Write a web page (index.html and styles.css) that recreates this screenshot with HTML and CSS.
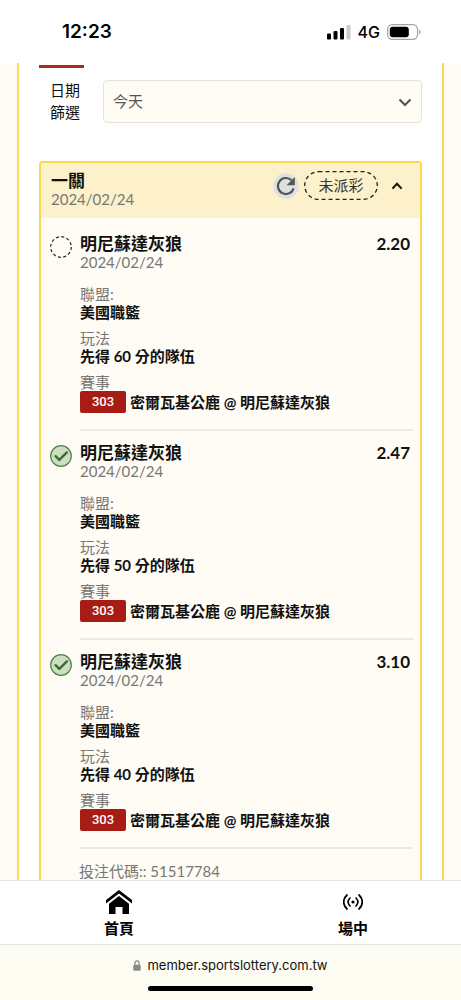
FILE: index.html
```html
<!DOCTYPE html>
<html lang="zh-Hant">
<head>
<meta charset="utf-8">
<meta name="viewport" content="width=device-width, initial-scale=1">
<title>投注紀錄</title>
<link rel="stylesheet" href="styles.css">
</head>
<body>
<header class="status">
  <span class="status-time">12:23</span>
  <span class="status-right">
    <svg width="24" height="16" viewBox="0 0 24 16"><rect x="0" y="9.500" width="4" height="6" rx="1"/><rect x="6.500" y="7" width="4" height="8.500" rx="1"/><rect x="13" y="4" width="4" height="11.500" rx="1"/><rect x="19.500" y="1" width="4" height="14.500" rx="1" fill="#ccc"/></svg>
    <span class="network">4G</span>
    <svg width="34" height="16" viewBox="0 0 34 16"><rect x=".7" y=".7" width="29.800" height="14.600" rx="4.500" fill="none" stroke="#a6a6a6" stroke-width="1.300"/><rect x="2.800" y="2.800" width="19" height="10.400" rx="3"/><path d="M32 5.500c2 .8 2 4.200 0 5z" fill="#a6a6a6"/></svg>
  </span>
</header>

<main class="page">
  <section class="panel">
    <div class="tab-mark"></div>
    <div class="filter">
      <label class="filter-label" for="range">日期篩選</label>
      <div class="select-wrap">
        <select class="select" id="range"><option>今天</option></select>
        <svg class="select-arrow" width="14" height="9" viewBox="0 0 14 9"><path d="M1.500 1.500 7 7l5.500-5.500" fill="none" stroke="#555" stroke-width="2.200"/></svg>
      </div>
    </div>

    <article class="card">
      <header class="card-head">
        <div class="card-name">
          <h1 class="title">一關</h1>
          <time class="date">2024/02/24</time>
        </div>
        <button class="icon-btn refresh" aria-label="重新整理">
          <svg width="26" height="26" viewBox="0 0 26 26"><circle cx="13" cy="13" r="12.800" fill="#dfe0e2"/><path d="M20.600 15.400A8 8 0 1 1 18.600 7.300" fill="none" stroke="#555" stroke-width="2.200"/><path d="M21.800 4v8.200h-8.200z" fill="#555"/></svg>
        </button>
        <span class="pill">
          <svg class="pill-line" width="74" height="29" viewBox="0 0 74 29"><rect x=".7" y=".7" width="72.600" height="27.600" rx="13.800" fill="none" stroke="#222" stroke-width="1.300" stroke-dasharray="4 3"/></svg>
          未派彩
        </span>
        <button class="icon-btn collapse" aria-label="收合">
          <svg width="12" height="8" viewBox="0 0 12 8"><path d="M1.400 6.600 6 1.800l4.600 4.800" fill="none" stroke="#111" stroke-width="2"/></svg>
        </button>
      </header>

      <div class="bets">
        <section class="bet">
          <svg class="bet-icon" width="22" height="22" viewBox="0 0 22 22"><circle cx="11" cy="11" r="10.300" fill="none" stroke="#222" stroke-width="1.200" stroke-dasharray="3 2.390"/></svg>
          <div class="bet-body">
            <div class="bet-top"><h2 class="title">明尼蘇達灰狼</h2><span class="odds">2.20</span></div>
            <time class="date">2024/02/24</time>
            <dl class="facts">
              <div><dt>聯盟:</dt><dd>美國職籃</dd></div>
              <div><dt>玩法</dt><dd>先得 60 分的隊伍</dd></div>
              <div><dt>賽事</dt><dd class="match"><span class="code">303</span>密爾瓦基公鹿 @ 明尼蘇達灰狼</dd></div>
            </dl>
          </div>
        </section>
        <section class="bet">
          <svg class="bet-icon" width="22" height="22" viewBox="0 0 22 22"><circle cx="11" cy="11" r="10.300" fill="#cfdcc4" stroke="#4c8543" stroke-width="1.200"/><path d="m5.600 11.200 3.700 3.700 7.600-7.500" fill="none" stroke="#357029" stroke-width="2.400" stroke-linecap="round" stroke-linejoin="round"/></svg>
          <div class="bet-body">
            <div class="bet-top"><h2 class="title">明尼蘇達灰狼</h2><span class="odds">2.47</span></div>
            <time class="date">2024/02/24</time>
            <dl class="facts">
              <div><dt>聯盟:</dt><dd>美國職籃</dd></div>
              <div><dt>玩法</dt><dd>先得 50 分的隊伍</dd></div>
              <div><dt>賽事</dt><dd class="match"><span class="code">303</span>密爾瓦基公鹿 @ 明尼蘇達灰狼</dd></div>
            </dl>
          </div>
        </section>
        <section class="bet">
          <svg class="bet-icon" width="22" height="22" viewBox="0 0 22 22"><circle cx="11" cy="11" r="10.300" fill="#cfdcc4" stroke="#4c8543" stroke-width="1.200"/><path d="m5.600 11.200 3.700 3.700 7.600-7.500" fill="none" stroke="#357029" stroke-width="2.400" stroke-linecap="round" stroke-linejoin="round"/></svg>
          <div class="bet-body">
            <div class="bet-top"><h2 class="title">明尼蘇達灰狼</h2><span class="odds">3.10</span></div>
            <time class="date">2024/02/24</time>
            <dl class="facts">
              <div><dt>聯盟:</dt><dd>美國職籃</dd></div>
              <div><dt>玩法</dt><dd>先得 40 分的隊伍</dd></div>
              <div><dt>賽事</dt><dd class="match"><span class="code">303</span>密爾瓦基公鹿 @ 明尼蘇達灰狼</dd></div>
            </dl>
          </div>
        </section>
        <p class="bet-id">投注代碼:: 51517784</p>
      </div>
    </article>
  </section>
</main>

<nav class="nav">
  <a class="nav-link" href="#home">
    <svg width="26" height="24" viewBox="0 0 26 24"><path d="M13 0 26 10v3.600L13 3.600 0 13.600V10z"/><path d="M13 6 23 13.800V24h-6.500v-7h-7v7H3V13.800z"/></svg>
    首頁
  </a>
  <a class="nav-link" href="#live">
    <svg width="20" height="24" viewBox="0 0 20 24" fill="none" stroke="#000" stroke-width="1.700" stroke-linecap="round"><path d="M4 5c-4.400 4-4.400 10 0 14M16 5c4.400 4 4.400 10 0 14M7 8c-2.500 2.400-2.500 5.600 0 8M13 8c2.500 2.400 2.500 5.600 0 8"/><circle cx="10" cy="12" r="1.600" fill="#000" stroke="none"/></svg>
    場中
  </a>
</nav>

<footer class="browser">
  <span class="address"><svg width="8" height="11" viewBox="0 0 8 11"><rect x=".3" y="4.700" width="7.400" height="6" rx="1.200" fill="#888"/><path d="M1.900 5V3.200a2.100 2.300 0 0 1 4.200 0V5" fill="none" stroke="#888" stroke-width="1.200"/></svg>member.sportslottery.com.tw</span>
  <div class="home-bar"></div>
</footer>
</body>
</html>
```
FILE: styles.css
```css
* {
  box-sizing: border-box;
}

body {
  margin: 0;
  height: 100vh;
  display: flex;
  flex-direction: column;
  background: #fffcf5;
  color: #111;
  font-family: Lato, "Noto Sans CJK TC", sans-serif;
  font-size: 15px;
  line-height: 18px;
}

h1, h2, p, dl, dd {
  margin: 0;
}

svg {
  display: block;
  flex: none;
}

.status {
  flex: none;
  height: 63px;
  padding: 0 40px 0 62px;
  display: flex;
  align-items: center;
  justify-content: space-between;
  background: #fff;
  color: #000;
  font-family: Inter, sans-serif;
}

.status-time {
  font-size: 19px;
  font-weight: 600;
}

.status-right {
  display: flex;
  align-items: center;
  gap: 7px;
}

.network {
  font-size: 16px;
  font-weight: 500;
}

.page {
  flex: 1;
  min-height: 0;
  overflow: hidden;
  padding: 0 17px;
}

.panel {
  padding: 2px 20px 20px;
  border: solid #fcdb55;
  border-width: 0 2px;
  background: #fff;
}

.tab-mark {
  width: 45px;
  height: 3px;
  background: #b3261e;
}

.filter {
  display: flex;
  align-items: center;
  gap: 22px;
  margin: 11px 0 38px;
  padding-left: 11px;
}

.filter-label {
  width: 31px;
  line-height: 22px;
}

.select-wrap {
  flex: 1;
  position: relative;
}

.select {
  width: 100%;
  height: 43px;
  padding: 0 9px;
  border: 1px solid #e6e3dd;
  border-radius: 4px;
  background: #fffcf5;
  color: #555;
  font: inherit;
  appearance: none;
}

.select-arrow {
  position: absolute;
  right: 10px;
  top: 18px;
  pointer-events: none;
}

.card {
  border: 2px solid #f8d94c;
  border-radius: 4px;
  background: #fffcf5;
}

.card-head {
  display: flex;
  align-items: flex-start;
  padding: 8px 17px 0 10px;
  height: 55px;
  background: #fcf1ca;
}

.card-name {
  flex: 1;
}

.title {
  font-size: 17px;
  line-height: 20px;
  font-weight: 700;
}

.date {
  display: block;
  line-height: 16px;
  color: #777;
}

.icon-btn {
  padding: 0;
  border: 0;
  background: none;
}

.refresh {
  margin: 2px 5px 0 0;
}

.pill {
  position: relative;
  width: 74px;
  line-height: 29px;
  text-align: center;
  color: #333;
}

.pill-line {
  position: absolute;
  inset: 0;
}

.collapse {
  margin: 11px 0 0 13px;
}

.bets {
  padding: 4px 7px 0 9px;
}

.bet {
  display: flex;
  gap: 8px;
}

.bet-icon {
  margin-top: 14px;
}

.bet-body {
  flex: 1;
  padding: 12px 0 16px;
  border-bottom: 2px solid #ebe9e4;
}

.bet-top {
  display: flex;
  justify-content: space-between;
  padding-right: 3px;
}

.odds {
  font-size: 17px;
  line-height: 20px;
  font-weight: 700;
}

.facts {
  display: grid;
  gap: 8px;
  margin-top: 15px;
}

.facts dt {
  color: #777;
}

.facts dd {
  font-weight: 700;
}

.facts .match {
  display: flex;
  align-items: center;
  gap: 4px;
  height: 22px;
}

.code {
  width: 46px;
  border-radius: 2px;
  background: #a71d16;
  color: #fff;
  font-family: Roboto, sans-serif;
  font-size: 13px;
  font-weight: 500;
  line-height: 22px;
  text-align: center;
}

.bet-id {
  padding: 13px 0 16px 29px;
  color: #777;
}

.nav {
  flex: none;
  display: grid;
  grid-template-columns: 51% 51%;
  overflow: hidden;
  padding: 9px 0 7px 2px;
  border: solid #e4e4e4;
  border-width: 1px 0;
  background: #fff;
}

.nav-link {
  display: flex;
  flex-direction: column;
  align-items: center;
  gap: 5px;
  color: #000;
  font-weight: 700;
  text-decoration: none;
}

.browser {
  flex: none;
  height: 55px;
  padding-top: 11px;
  display: flex;
  flex-direction: column;
  align-items: center;
  gap: 12px;
  background: #fcfcf2;
}

.address {
  display: flex;
  align-items: center;
  gap: 6px;
  font-family: Inter, sans-serif;
  font-size: 13px;
}

.home-bar {
  width: 165px;
  height: 5px;
  border-radius: 3px;
  background: #000;
}
```
